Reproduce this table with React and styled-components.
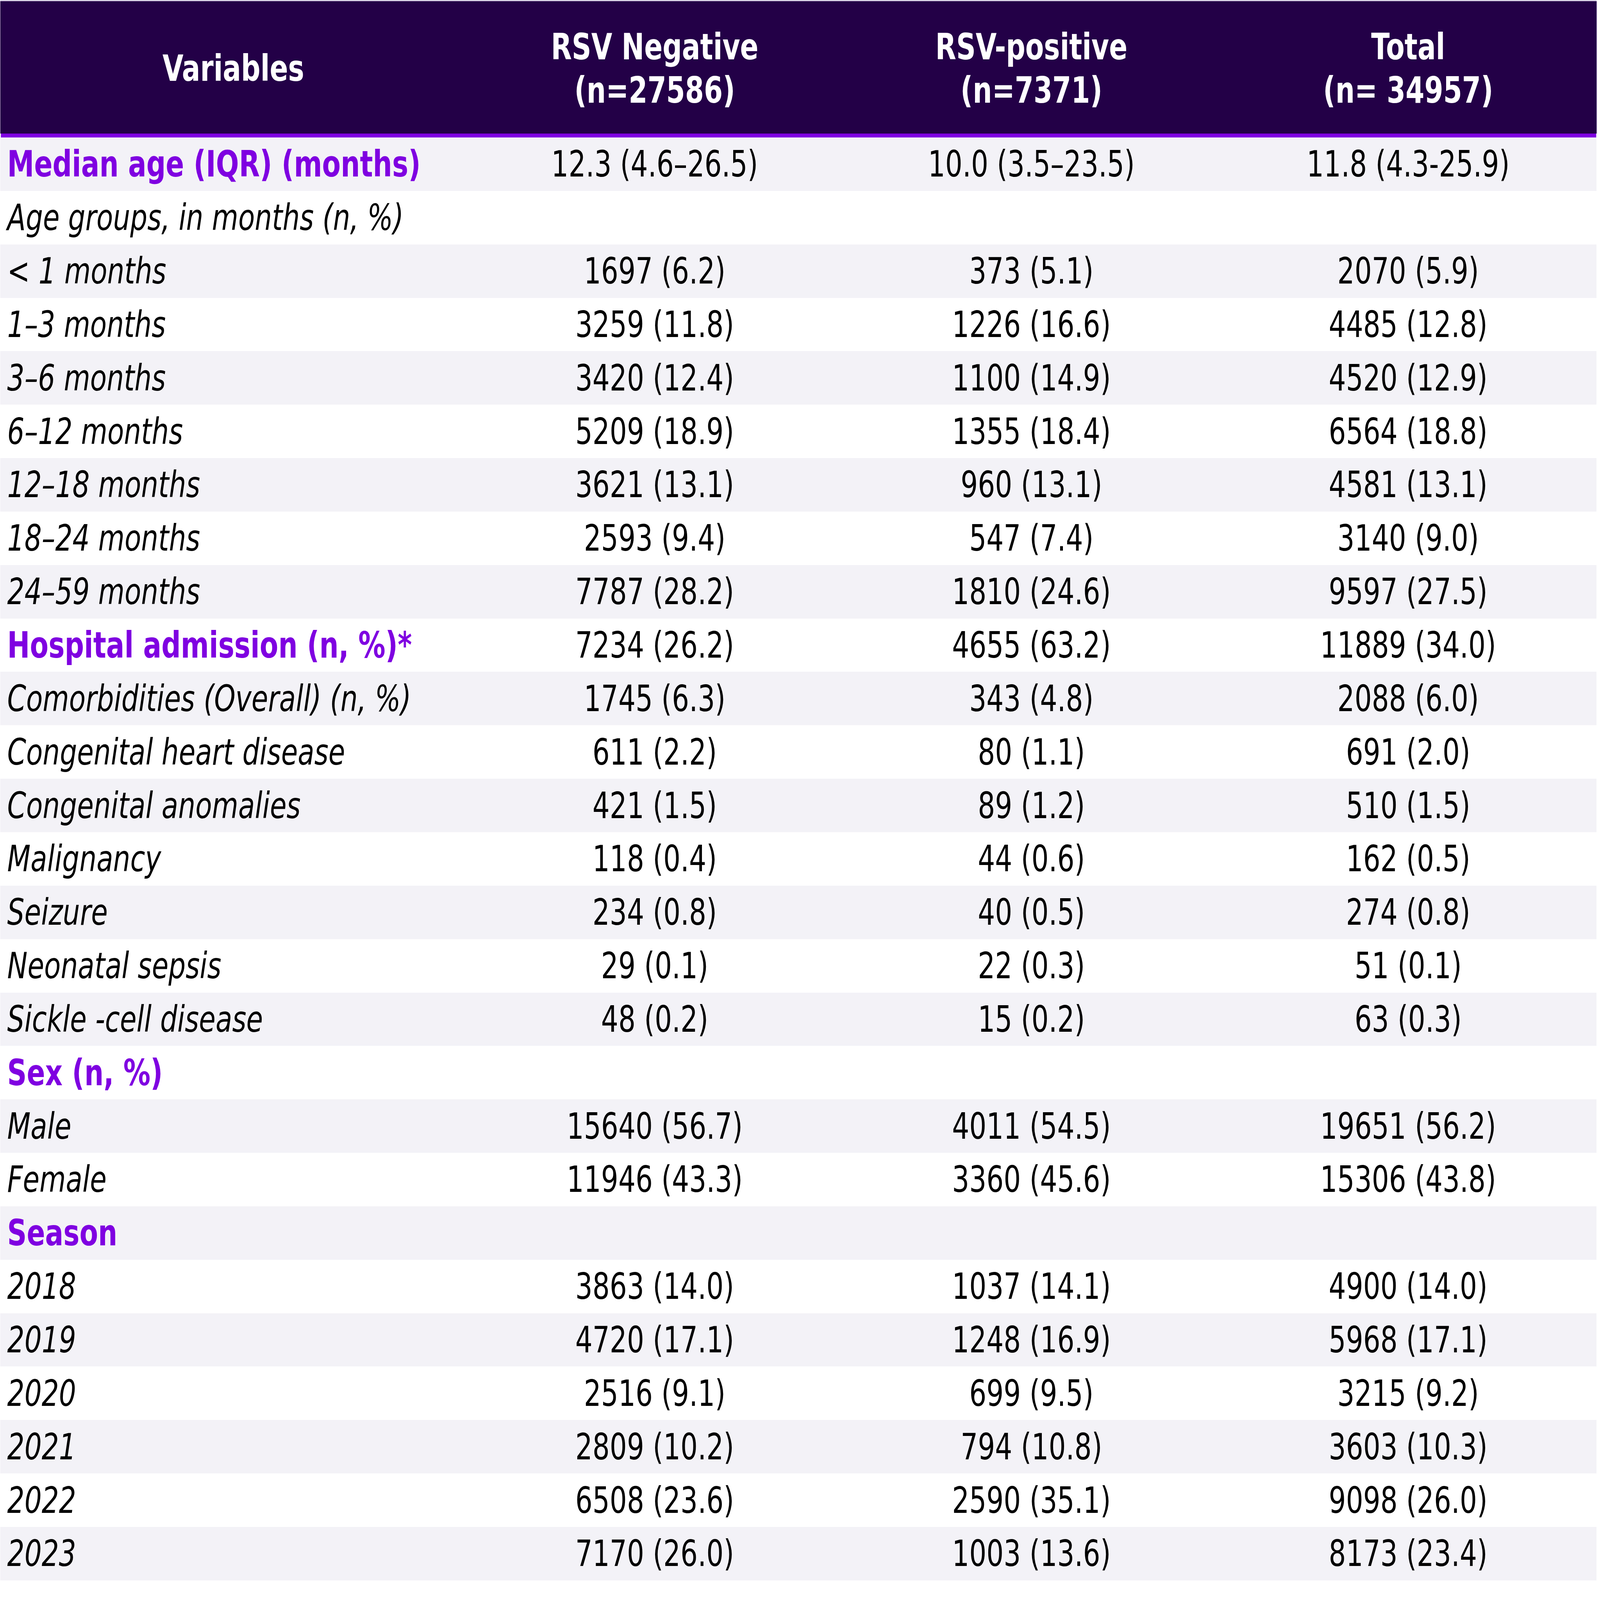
import React from "react";
import styled, { createGlobalStyle } from "styled-components";

const GlobalStyle = createGlobalStyle`
  html, body { margin: 0; padding: 0; background: #ffffff; overflow: hidden; }
  body { font-family: "DejaVu Sans", Verdana, sans-serif; }
`;

const FIT_X = 4096 / 5500;
const COLS = "1602px 1295px 1295px 1295px";

const Page = styled.div`
  width: 5500px;
  height: 4092px;
  padding: 0 0 0 1px;
  box-sizing: border-box;
  background: #ffffff;
  transform: scaleX(${FIT_X});
  transform-origin: 0 0;
`;

const Table = styled.div`
  width: 5487px;
  border-top: 3px solid #d9d2e6;
  display: flex;
  flex-direction: column;
`;

const HeadRow = styled.div`
  display: grid;
  grid-template-columns: ${COLS};
  height: 339px;
  background: #230047;
  box-shadow: 2px 0 0 #b9a8d0;
`;

const HeadCell = styled.div`
  display: flex;
  align-items: center;
  justify-content: center;
  text-align: center;
  color: #ffffff;
  font-weight: bold;
  font-size: 93px;
  line-height: 111px;
  padding-top: 6px;
  box-sizing: border-box;
`;

const Bar = styled.div`
  height: 10px;
  margin: 0 1px 0 2px;
  background: #7f00e1;
`;

const Row = styled.div`
  display: grid;
  grid-template-columns: ${COLS};
  height: 136.85px;
  background: ${(p) => (p.$striped ? "#f3f2f7" : "#ffffff")};
`;

const Label = styled.div`
  display: flex;
  align-items: center;
  padding-left: 24px;
  font-size: 93px;
  white-space: nowrap;
  color: ${(p) => (p.$section ? "#7f00e1" : "#000000")};
  font-weight: ${(p) => (p.$section ? "bold" : "normal")};
  font-style: ${(p) => (p.$section ? "normal" : "italic")};
`;

const Value = styled.div`
  display: flex;
  align-items: center;
  justify-content: center;
  font-size: 93px;
  white-space: nowrap;
  color: #000000;
`;

const rows = [
  { label: "Median age (IQR) (months)", section: true, v: ["12.3 (4.6–26.5)", "10.0 (3.5–23.5)", "11.8 (4.3-25.9)"] },
  { label: "Age groups, in months (n, %)", v: ["", "", ""] },
  { label: "< 1 months", v: ["1697 (6.2)", "373 (5.1)", "2070 (5.9)"] },
  { label: "1–3 months", v: ["3259 (11.8)", "1226 (16.6)", "4485 (12.8)"] },
  { label: "3–6 months", v: ["3420 (12.4)", "1100 (14.9)", "4520 (12.9)"] },
  { label: "6–12 months", v: ["5209 (18.9)", "1355 (18.4)", "6564 (18.8)"] },
  { label: "12–18 months", v: ["3621 (13.1)", "960 (13.1)", "4581 (13.1)"] },
  { label: "18–24 months", v: ["2593 (9.4)", "547 (7.4)", "3140 (9.0)"] },
  { label: "24–59 months", v: ["7787 (28.2)", "1810 (24.6)", "9597 (27.5)"] },
  { label: "Hospital admission (n, %)*", section: true, v: ["7234 (26.2)", "4655 (63.2)", "11889 (34.0)"] },
  { label: "Comorbidities (Overall) (n, %)", v: ["1745 (6.3)", "343 (4.8)", "2088 (6.0)"] },
  { label: "Congenital heart disease", v: ["611 (2.2)", "80 (1.1)", "691 (2.0)"] },
  { label: "Congenital anomalies", v: ["421 (1.5)", "89 (1.2)", "510 (1.5)"] },
  { label: "Malignancy", v: ["118 (0.4)", "44 (0.6)", "162 (0.5)"] },
  { label: "Seizure", v: ["234 (0.8)", "40 (0.5)", "274 (0.8)"] },
  { label: "Neonatal sepsis", v: ["29 (0.1)", "22 (0.3)", "51 (0.1)"] },
  { label: "Sickle -cell disease", v: ["48 (0.2)", "15 (0.2)", "63 (0.3)"] },
  { label: "Sex (n, %)", section: true, v: ["", "", ""] },
  { label: "Male", v: ["15640 (56.7)", "4011 (54.5)", "19651 (56.2)"] },
  { label: "Female", v: ["11946 (43.3)", "3360 (45.6)", "15306 (43.8)"] },
  { label: "Season", section: true, v: ["", "", ""] },
  { label: "2018", v: ["3863 (14.0)", "1037 (14.1)", "4900 (14.0)"] },
  { label: "2019", v: ["4720 (17.1)", "1248 (16.9)", "5968 (17.1)"] },
  { label: "2020", v: ["2516 (9.1)", "699 (9.5)", "3215 (9.2)"] },
  { label: "2021", v: ["2809 (10.2)", "794 (10.8)", "3603 (10.3)"] },
  { label: "2022", v: ["6508 (23.6)", "2590 (35.1)", "9098 (26.0)"] },
  { label: "2023", v: ["7170 (26.0)", "1003 (13.6)", "8173 (23.4)"] },
];

export default function App() {
  return (
    <>
      <GlobalStyle />
      <Page>
        <Table>
          <HeadRow>
            <HeadCell>Variables</HeadCell>
            <HeadCell>RSV Negative<br />(n=27586)</HeadCell>
            <HeadCell>RSV-positive<br />(n=7371)</HeadCell>
            <HeadCell>Total<br />(n= 34957)</HeadCell>
          </HeadRow>
          <Bar />
          {rows.map((r, i) => (
            <Row key={i} $striped={i % 2 === 0}>
              <Label $section={r.section}>{r.label}</Label>
              {r.v.map((val, j) => (
                <Value key={j}>{val}</Value>
              ))}
            </Row>
          ))}
        </Table>
      </Page>
    </>
  );
}
